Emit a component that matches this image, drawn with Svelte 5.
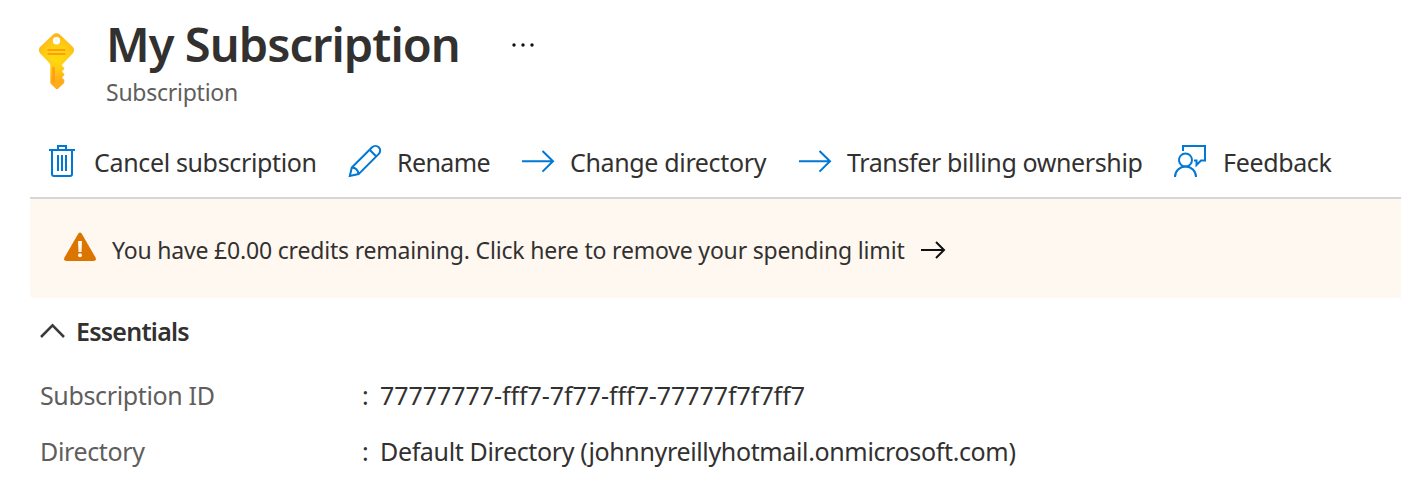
<script>
  const details = [
    { label: 'Subscription ID', value: '77777777-fff7-7f77-fff7-77777f7f7ff7', kind: 'id' },
    { label: 'Directory', value: 'Default Directory (johnnyreillyhotmail.onmicrosoft.com)', kind: 'dir' }
  ];
</script>

{#snippet arrow()}
  <svg class="icon" width="34" height="34" viewBox="0 0 34 34"><path d="M1 17.300H32M21.500 7L32 17.300L21.500 27.600" /></svg>
{/snippet}

<main>
  <header>
    <svg class="key" width="36" height="58" viewBox="0 0 36 58">
      <defs>
        <radialGradient id="gold" cx="18" cy="24" r="25" gradientUnits="userSpaceOnUse">
          <stop offset="0.2" stop-color="#ffd70f" />
          <stop offset="0.55" stop-color="#ffc914" />
          <stop offset="1" stop-color="#feac19" />
        </radialGradient>
      </defs>
      <path fill="url(#gold)" fill-rule="evenodd" d="M33.700 14.800a4.600 4.600 0 0 1 0 6.600L23.700 32a3 3 0 0 0-.7 1.800l2.300 2.300v1l-2 2v1l2 2v1l-2 2v1l2 2v1l-.2 2-5.700 5.500a2 2 0 0 1-2.800 0l-4.400-4.300a3 3 0 0 1-.9-2.100V33a3 3 0 0 0-.9-2L1.300 21.400a4.600 4.600 0 0 1 0-6.600L14.200 2.600a4.600 4.600 0 0 1 6.600 0zM17.500 5a3.700 3.700 0 1 0 0 7.400A3.700 3.700 0 1 0 17.500 5z" />
      <path fill="#ff9f0d" d="M9 17h17a.5.5 0 0 1 .5.5v1a.5.5 0 0 1-.5.5h-17a.5.5 0 0 1-.5-.5v-1a.5.5 0 0 1 .5-.5zm0 4h17a.5.5 0 0 1 .5.5v1a.5.5 0 0 1-.5.5h-17a.5.5 0 0 1-.5-.5v-1a.5.5 0 0 1 .5-.5zM15 35q.8 0 .8.800v14.200q0 1-.8 1l-1.700-1.500v-13.700q0-.8.800-.8z" />
    </svg>
    <div class="heading">
      <h1>My Subscription</h1>
      <p>Subscription</p>
    </div>
    <svg class="more" width="26" height="6" viewBox="0 0 26 6"><circle cx="3" cy="3" r="1.700" /><circle cx="12" cy="3" r="1.700" /><circle cx="21" cy="3" r="1.700" /></svg>
  </header>

  <nav>
    <button class="cancel">
      <svg class="icon" width="34" height="34" viewBox="0 0 34 34"><path d="M4 6H30M7 6V30Q7 32 9 32H25Q27 32 27 30V6M13 5V2H21V5M13 11V27M17 11V27M21 11V27" /></svg>
      <span>Cancel subscription</span>
    </button>
    <button class="rename">
      <svg class="icon" width="34" height="34" viewBox="0 0 34 34"><path d="M1.800 32L3.800 23.500L24.100 3.300A4.700 4.700 0 0 1 30.800 9.900L10.600 30.100ZM21.600 5.800L28.300 12.500M3.800 23.500Q9.600 23.800 10.600 30.100" /></svg>
      <span>Rename</span>
    </button>
    <button class="change">{@render arrow()}<span>Change directory</span></button>
    <button class="transfer">{@render arrow()}<span>Transfer billing ownership</span></button>
    <button class="feedback">
      <svg class="icon" width="34" height="34" viewBox="0 0 34 34"><path d="M10 7V2H32V16.500H28L23.500 21V16.500H21M2 33A10.500 10.500 0 0 1 23 33" /><circle cx="12.500" cy="16" r="6.500" /></svg>
      <span>Feedback</span>
    </button>
  </nav>

  <section class="banner">
    <svg class="warning" width="32" height="30" viewBox="0 0 32 30"><path fill="#db7500" d="M14.200 1.700Q16-.7 17.800 1.700L31.400 25.300Q33 28.900 29.300 29H2.700Q-1 28.900.600 25.300Z" /><path fill="#fff8f1" d="M14 9h4l-.5 11h-3z" /><circle fill="#fff8f1" cx="16" cy="23.300" r="2" /></svg>
    <span>You have £0.00 credits remaining. Click here to remove your spending limit</span>
    <svg class="go" width="26" height="18" viewBox="0 0 26 18"><path d="M1 9H24M16 1L24 9L16 17" /></svg>
  </section>

  <section class="essentials">
    <h2><svg width="26" height="16" viewBox="0 0 26 16"><path d="M1 14L12.500 2.300L24 14" /></svg><span>Essentials</span></h2>
    <dl>
      {#each details as item}
        <div class={item.kind}><dt>{item.label}</dt><i>:</i><dd>{item.value}</dd></div>
      {/each}
    </dl>
  </section>
</main>

<style>
  :global(body) { background: #fff; overflow: hidden; }
  main { height: 491px; overflow: hidden; color: #323130; font-family: "Noto Sans", "Open Sans", sans-serif; font-size: 25px; white-space: nowrap; }
  h1, h2, p, dl, dd { margin: 0; }
  header { display: flex; align-items: flex-start; height: 129px; padding-left: 39px; box-sizing: border-box; }
  .key { flex: none; margin-top: 32px; }
  .heading { width: 405px; margin-left: 31px; flex: none; }
  h1 { margin-top: 12px; font-size: 47px; line-height: 64px; font-weight: 600; letter-spacing: -0.95px; }
  p { color: #605e5c; font-size: 23px; line-height: 32px; letter-spacing: -0.25px; }
  .more { margin-top: 42px; fill: #111; }
  nav { display: flex; height: 68px; margin-left: 30px; padding-left: 15px; border-bottom: 2px solid #d6d6d6; }
  button { display: flex; align-items: center; flex: none; height: 68px; padding: 0; border: 0; background: none; color: inherit; font: inherit; letter-spacing: -0.35px; }
  button span { margin: -2px 0 0 15px; }
  .icon { fill: none; stroke: #0078d4; stroke-width: 2; flex: none; margin-top: -4px; }
  .cancel { width: 303px; }
  .rename { width: 173px; letter-spacing: -0.6px; }
  .change { width: 277px; }
  .transfer { width: 375px; letter-spacing: -0.38px; }
  .feedback span { margin-left: 16px; }
  .banner { display: flex; align-items: center; height: 99px; margin-left: 30px; padding-left: 34px; background: #fff8f1; border-radius: 4px 0 0 4px; font-size: 23px; letter-spacing: -0.187px; }
  .banner span { width: 793px; margin: 3px 15px 0 16px; }
  .warning { margin-top: -3px; flex: none; }
  .go { fill: none; stroke: #111; stroke-width: 2; flex: none; margin-top: 3px; }
  .essentials { padding-left: 40px; }
  h2 { display: flex; align-items: center; height: 70px; font-size: 25px; font-weight: 600; letter-spacing: -0.75px; }
  h2 svg { fill: none; stroke: #3b3a39; stroke-width: 2.500; margin-top: -4px; }
  h2 span { margin: -4px 0 0 10px; }
  dl div { display: flex; align-items: center; height: 56px; margin-top: -1px; letter-spacing: -0.36px; }
  dl div + div { margin-top: 0; }
  dt { width: 322px; color: #605e5c; }
  i { width: 18px; font-style: normal; }
  .id dd { letter-spacing: -0.06px; }
</style>
